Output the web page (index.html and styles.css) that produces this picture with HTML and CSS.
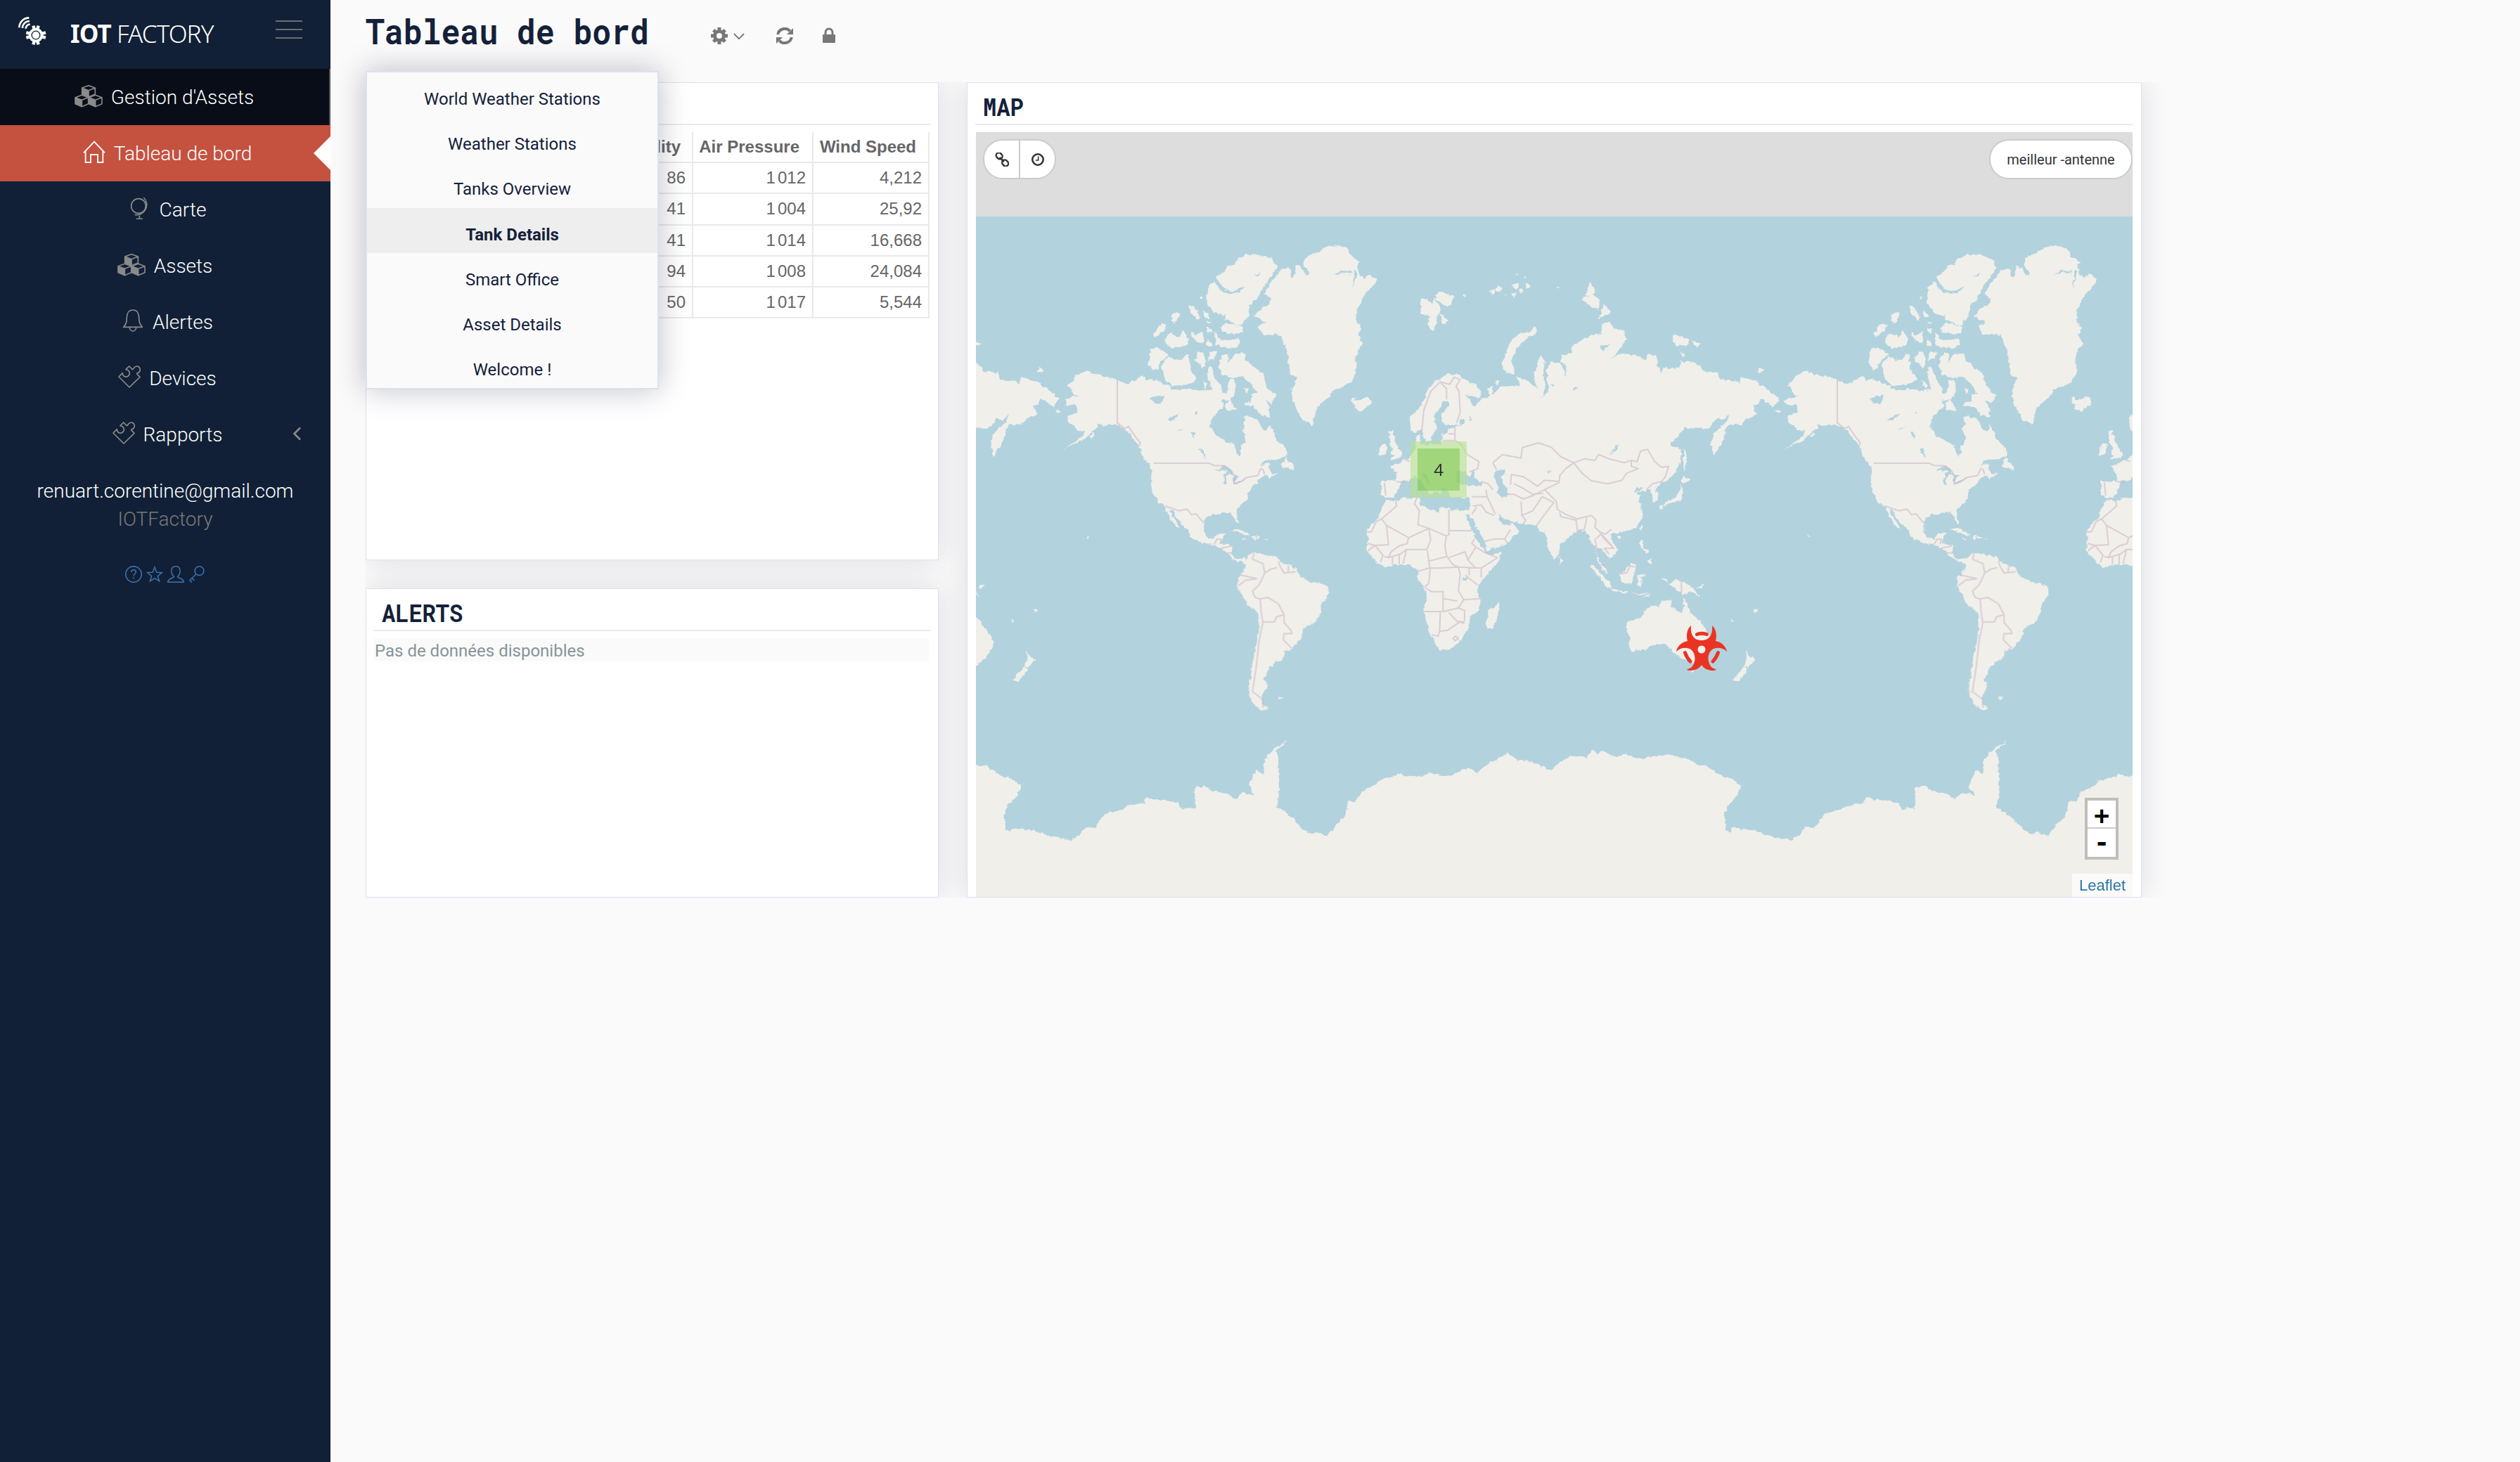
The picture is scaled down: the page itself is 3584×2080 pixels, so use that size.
FILE: index.html
```html
<!DOCTYPE html>
<html lang="fr">
<head>
<meta charset="utf-8">
<title>IOT Factory - Tableau de bord</title>
<link rel="stylesheet" href="styles.css">
</head>
<body>
<svg class="defs" width="0" height="0">
  <defs>
    <symbol id="cube" viewBox="0 0 64 56" overflow="visible">
      <path d="M32 3L60 13V40L32 52L4 40V13Z M4 13L32 24L60 13 M32 24V52" fill="none" stroke="currentColor" stroke-width="5" stroke-linejoin="round"/>
      <path d="M4 13L32 24V52L4 40Z" fill="currentColor"/>
    </symbol>
    <symbol id="cubes" viewBox="0 0 120 96">
      <use href="#cube" x="28" y="-1" width="64" height="56"/>
      <use href="#cube" x="-1" y="40" width="64" height="56"/>
      <use href="#cube" x="57" y="40" width="64" height="56"/>
    </symbol>
    <symbol id="puzzle" viewBox="0 0 96 96">
      <path d="M48 93L3 48L19 32C18 44 29 52 40 47C51 42 52 26 42 20L33 17L47 3L61 17C64 16 65 14 67 11C72 2 85 1 91 9C97 18 92 31 82 32C79 33 79 36 82 38L93 49Z" fill="none" stroke="currentColor" stroke-width="5" stroke-linejoin="round"/>
    </symbol>
  </defs>
</svg>

<aside class="sidebar">
  <header class="brand">
    <svg class="brand-mark" viewBox="0 0 120 120">
      <g fill="none" stroke="#fff" stroke-width="8">
        <path d="M4 46A42 42 0 0 1 46 4"/><path d="M18 48A30 30 0 0 1 48 18" /><path d="M32 50A18 18 0 0 1 50 32"/>
      </g>
      <circle cx="75" cy="78" r="31" fill="#fff"/>
      <g stroke="#fff" stroke-width="13">
        <path d="M64 38L86 118M86 38L64 118M34 67L117 89M34 89L117 67"/>
      </g>
      <circle cx="75" cy="78" r="17.5" fill="#fff" stroke="#112036" stroke-width="4"/>
    </svg>
    <div class="brand-name"><b>IOT</b> FACTORY</div>
    <div class="burger"><i></i><i></i><i></i></div>
  </header>
  <nav class="nav">
    <a class="nav-item nav-item--dark nav-item--cubes"><svg class="ico-cubes"><use href="#cubes"/></svg><span>Gestion d'Assets</span></a>
    <a class="nav-item nav-item--active"><svg class="ico" viewBox="0 0 96 96"><path d="M3 52L48 5L93 52M11 45V93H33V60H63V93H85V45" fill="none" stroke="currentColor" stroke-width="5.5"/></svg><span>Tableau de bord</span></a>
    <a class="nav-item"><svg class="ico" viewBox="0 0 96 96"><g fill="none" stroke="currentColor" stroke-width="5"><circle cx="42" cy="39" r="31"/><path d="M64 3A43 43 0 0 1 26 76M46 80V93M32 94H60"/></g></svg><span>Carte</span></a>
    <a class="nav-item nav-item--cubes"><svg class="ico-cubes"><use href="#cubes"/></svg><span>Assets</span></a>
    <a class="nav-item"><svg class="ico" viewBox="0 0 96 96"><path d="M8 76C18 64 22 58 22 36C22 16 32 3 48 3S74 16 74 36C74 58 78 64 88 76ZM34 78C34 98 62 98 62 78" fill="none" stroke="currentColor" stroke-width="5" stroke-linejoin="round"/></svg><span>Alertes</span></a>
    <a class="nav-item"><svg class="ico"><use href="#puzzle"/></svg><span>Devices</span></a>
    <a class="nav-item"><svg class="ico"><use href="#puzzle"/></svg><span>Rapports</span><svg class="nav-more" viewBox="0 0 12 20"><path d="M11 1.500L2.500 10L11 18.500" fill="none" stroke="currentColor" stroke-width="2.600"/></svg></a>
  </nav>
  <div class="user">
    <div class="user-mail">renuart.corentine@gmail.com</div>
    <div class="user-org">IOTFactory</div>
    <div class="user-links">
      <svg viewBox="0 0 24 24"><circle cx="12" cy="12" r="11.300"/><path d="M8.800 9C8.800 4.800 15.300 4.800 15.300 9C15.300 11.500 12 11.500 12 14.500M12 16.500V18.500"/></svg>
      <svg viewBox="0 0 24 24"><path d="M12 2L14.800 9.200L22.300 9.600L16.500 14.400L18.500 21.800L12 17.600L5.500 21.800L7.500 14.400L1.700 9.600L9.200 9.200Z"/></svg>
      <svg viewBox="0 0 24 24"><path d="M9.500 15.500C4.500 11 4 .8 12 .8S19.500 11 14.500 15.500C15.500 18 23.200 17.500 23.200 23.200H.8C.8 17.500 8.500 18 9.500 15.500Z"/></svg>
      <svg viewBox="0 0 24 24"><circle cx="15.500" cy="7.200" r="6.400"/><path d="M11 11.800L2 20.500L5 23.500M5 17.500L8.500 21"/></svg>
    </div>
  </div>
</aside>

<main class="main">
  <header class="topbar">
    <h1 class="title">Tableau de bord</h1>
    <div class="tools">
      <svg class="tool-gear" viewBox="0 0 24 24"><g stroke="currentColor" stroke-width="5"><path d="M12 0V24M0 12H24M3.800 3.800L20.200 20.200M20.200 3.800L3.800 20.200"/></g><circle cx="12" cy="12" r="8.800" fill="currentColor"/><circle cx="12" cy="12" r="4" fill="#fafafa"/></svg>
      <svg class="tool-chev" viewBox="0 0 16 10"><path d="M1 1L8 8.200L15 1" fill="none" stroke="currentColor" stroke-width="1.800"/></svg>
      <svg class="tool-sync" viewBox="0 0 24 24"><path d="M2.200 10A10 10 0 0 1 19.500 5.200M21.800 14A10 10 0 0 1 4.500 18.800" fill="none" stroke="currentColor" stroke-width="4"/><path d="M24 1V10H15ZM0 23V14H9Z" fill="currentColor"/></svg>
      <svg class="tool-lock" viewBox="0 0 18 22"><path d="M4 11V7.500A5 5.500 0 0 1 14 7.500V11" fill="none" stroke="currentColor" stroke-width="3"/><rect y="10" width="18" height="12" rx="1" fill="currentColor"/></svg>
    </div>
    <ul class="menu">
      <li>World Weather Stations</li>
      <li>Weather Stations</li>
      <li>Tanks Overview</li>
      <li class="is-current">Tank Details</li>
      <li>Smart Office</li>
      <li>Asset Details</li>
      <li>Welcome !</li>
    </ul>
  </header>

  <section class="board">
    <article class="card card--data">
      <div class="card-head"></div>
      <table class="grid">
        <thead><tr><th class="c1">Humidity</th><th class="c2">Air Pressure</th><th class="c3">Wind Speed</th></tr></thead>
        <tbody>
          <tr><td>86</td><td><i>1</i>012</td><td>4,212</td></tr>
          <tr><td>41</td><td><i>1</i>004</td><td>25,92</td></tr>
          <tr><td>41</td><td><i>1</i>014</td><td>16,668</td></tr>
          <tr><td>94</td><td><i>1</i>008</td><td>24,084</td></tr>
          <tr><td>50</td><td><i>1</i>017</td><td>5,544</td></tr>
        </tbody>
      </table>
    </article>

    <article class="card card--alerts">
      <div class="card-head"><h2>ALERTS</h2></div>
      <p class="empty">Pas de données disponibles</p>
    </article>

    <article class="card card--map">
      <div class="card-head"><h2>MAP</h2></div>
      <div class="map">
        <svg class="map-tiles" viewBox="1388 188 1645 1088" preserveAspectRatio="none">
          <defs>
            <filter id="coast" x="0" y="0" width="100%" height="100%">
              <feTurbulence type="fractalNoise" baseFrequency="0.16" numOctaves="2" seed="4"/>
              <feDisplacementMap in="SourceGraphic" scale="6" xChannelSelector="R" yChannelSelector="G"/>
              <feGaussianBlur stdDeviation="0.5"/>
            </filter>
            <g id="world-land">
              <g transform="translate(1460 330) scale(.33333)">
                <path d="M258 592L285 608L320 612L360 622L387 630L430 650L470 628L500 613L510 634L530 630L560 635L590 648L612 655L612 670L660 675L690 668L715 672L750 680L765 672L790 675L785 650L772 620L775 580L790 575L803 620L815 640L830 650L835 685L850 690L860 670L865 630L885 630L893 660L890 690L870 715L830 720L842 745L815 770L790 795L783 830L800 850L805 870L840 885L860 900L888 905L890 930L905 957L915 945L912 915L935 895L935 870L920 850L930 820L925 790L945 785L985 800L1000 830L1015 850L1030 845L1040 822L1060 865L1070 890L1110 925L1112 950L1080 970L1020 972L995 1002L1015 990L1040 985L1035 1010L1050 1035L1078 1025L1035 1054L1025 1040L1010 1042L988 1060L985 1075L965 1085L950 1100L945 1115L943 1140L900 1180L893 1200L907 1240L898 1245L882 1215L870 1198L835 1198L820 1208L790 1205L765 1220L757 1245L757 1280L770 1305L800 1310L815 1290L850 1283L840 1310L830 1330L850 1333L882 1340L877 1370L885 1390L905 1398L925 1388L940 1402L928 1410L905 1408L880 1395L855 1368L830 1350L800 1335L765 1332L730 1318L695 1298L690 1275L660 1245L635 1215L622 1188L610 1185L625 1215L640 1240L657 1267L640 1260L615 1225L595 1190L592 1170L560 1155L535 1105L530 1060L535 1015L520 985L498 965L490 940L478 910L460 890L430 850L410 835L385 825L350 822L325 828L305 820L300 835L285 850L265 868L240 888L210 903L185 914L150 935L188 908L215 890L240 870L250 850L215 845L205 825L178 810L175 785L218 770L215 740L175 740L160 718L195 705L220 705L200 690L190 670L172 655L200 635L210 612L235 602Z"/>
                <path d="M1065 190L1085 165L1115 152L1130 165L1125 190L1140 195L1150 145L1165 145L1180 165L1200 190L1208 175L1180 140L1190 110L1220 95L1250 80L1290 62L1330 57L1370 72L1385 100L1420 128L1412 155L1420 180L1440 195L1465 180L1494 205L1480 230L1445 265L1425 300L1410 340L1408 380L1428 410L1415 440L1435 475L1415 500L1405 545L1405 605L1385 640L1350 660L1315 670L1295 700L1270 720L1245 740L1235 770L1225 800L1218 827L1200 808L1180 805L1160 775L1140 730L1130 690L1140 655L1155 620L1125 610L1120 560L1112 510L1095 470L1085 445L1065 435L1010 442L985 405L1020 385L970 360L1005 325L1035 310L1042 285L1015 265L1040 220Z"/>
                <path d="M1068 150L1045 115L1000 98L940 95L900 115L885 140L860 145L840 170L808 190L830 225L850 245L880 255L915 240L930 232L910 255L870 265L845 258L820 240L800 210L775 240L768 300L795 340L840 360L850 345L845 375L870 380L890 397L920 400L925 380L945 365L955 310L985 285L1000 250L1030 210Z"/>
                <path d="M830 410L850 385L925 408L915 432L880 435L830 425ZM805 425L825 460L870 462L905 453L912 480L890 495L830 492L805 480ZM767 408L790 415L793 432L770 425ZM770 460L788 470L790 490L768 480ZM700 425L720 440L750 425L757 460L750 478L720 465ZM575 390L600 395L590 420L550 447L543 437ZM590 455L615 430L650 450L665 420L690 455L680 485L620 497L590 470ZM690 312L715 320L742 365L730 375L700 345ZM625 345L655 342L650 360L635 390L615 378ZM752 335L775 350L780 370L758 365ZM770 380L792 382L780 392ZM735 275L748 275L746 290Z"/>
                <path d="M530 500L560 495L605 525L575 550L560 580L543 590L520 565ZM605 530L635 545L665 545L680 520L695 525L700 590L728 625L700 650L620 657L590 625L583 600L575 570ZM735 512L757 515L765 560L750 585L735 560L715 545ZM780 510L818 512L800 540L775 550ZM845 518L862 520L860 560L875 535L890 520L930 520L935 550L1010 605L1018 640L1030 670L1066 697L1045 733L1020 720L1035 750L1038 795L1000 780L970 745L925 742L930 728L960 722L960 690L985 690L960 650L920 615L880 625L830 605L822 570L828 535ZM850 725L870 715L880 740L900 760L850 765ZM930 665L948 670L940 687ZM753 632L772 650L760 668Z"/>
                <path d="M1385 708L1405 705L1400 720L1425 715L1455 703L1475 730L1430 766L1400 755L1402 740L1385 725ZM1105 955L1115 980L1133 985L1139 1018L1120 1010L1088 1003ZM868 1272L900 1266L955 1295L930 1294L900 1278ZM960 1300L985 1296L1005 1306L975 1313ZM42 592L60 580L76 592L48 600ZM120 762L135 760L147 770L133 771ZM258 1295L270 1300L262 1306ZM270 872L285 855L292 862L278 878ZM922 1308H938V1313H922ZM1015 1308H1030V1312H1015Z"/>
              </g>
              <path transform="translate(1360 600) scale(.548469 .446429)" d="M735 440L750 440L765 420L780 418L800 425L828 428L838 445L860 455L880 465L888 490L915 508L945 515L965 530L967 548L948 580L943 615L930 640L900 660L895 690L870 725L850 730L853 745L845 758L825 765L825 778L810 782L808 800L798 820L808 840L798 865L792 880L795 900L810 912L795 920L775 905L762 880L757 850L765 800L770 750L780 700L784 650L785 610L755 585L740 550L728 525L732 495L745 475L750 455ZM833 878L850 878L840 885ZM715 343L735 342L763 360L745 360Z"/>
              <g transform="translate(1900 520) scale(.382653 .333333)">
                <path d="M190 572L218 580L250 567L315 562L312 598L350 612L380 628L388 603L435 615L478 620L500 618L490 645L505 690L520 735L540 770L560 805L575 808L617 798L605 835L570 880L545 912L528 940L525 965L537 1000L535 1040L497 1075L498 1110L478 1150L450 1190L430 1208L383 1218L370 1190L350 1145L325 1050L338 990L325 940L303 910L308 870L290 862L268 848L220 850L180 862L150 840L112 790L118 740L112 710L130 680L160 650L165 615ZM602 1006L610 1035L595 1090L582 1125L562 1122L558 1090L565 1045L590 1030Z"/>
                <path d="M1085 1095L1140 1075L1145 1050L1170 1025L1200 1025L1215 1000L1252 1005L1245 1030L1280 1055L1290 1040L1293 990L1305 1015L1320 1060L1350 1085L1377 1130L1405 1180L1398 1210L1370 1250L1340 1280L1320 1262L1280 1250L1260 1225L1245 1215L1220 1188L1185 1190L1150 1210L1105 1220L1090 1205L1092 1160L1078 1115ZM1310 1295L1338 1297L1326 1312Z"/>
                <path d="M195 280L212 275L208 292L220 300L218 325L232 350L247 372L240 395L200 405L215 385L205 375L212 355L200 330ZM175 335L190 335L188 372L160 385L162 355Z"/>
              </g>
              <g transform="translate(1980 370) scale(.333333)">
                <path d="M-20 1015L-47 1005L-47 940L18 945L18 910L-8 880L10 875L47 855L76 840L100 800L105 750L120 745L118 790L170 785L210 785L215 745L240 740L235 720L300 702L270 705L230 705L213 690L212 655L243 620L243 600L220 600L210 625L185 650L178 690L195 715L175 740L165 772L140 772L130 745L125 718L100 738L80 730L74 670L110 640L140 590L150 550L190 515L240 485L290 490L300 508L330 520L360 535L382 565L375 590L345 585L312 573L330 600L350 630L370 600L420 578L405 545L425 540L430 572L460 540L545 535L530 495L580 515L618 548L605 490L622 430L635 405L650 435L645 490L655 540L640 585L660 570L665 540L658 470L680 435L720 440L745 500L740 450L720 430L722 405L765 400L770 365L850 320L892 315L895 275L925 262L945 290L985 300L1000 340L985 365L935 422L970 400L1000 405L1040 405L1080 425L1090 400L1130 410L1130 450L1150 485L1160 455L1175 465L1225 460L1230 430L1270 435L1305 445L1330 475L1390 480L1400 510L1465 515L1480 528L1490 500L1552 515L1612 560L1652 590L1627 625L1597 605L1572 592L1562 618L1537 620L1560 660L1512 677L1485 705L1440 700L1422 725L1417 765L1385 815L1372 838L1358 785L1370 740L1400 715L1425 690L1437 658L1412 685L1385 675L1350 720L1250 718L1185 788L1200 795L1235 805L1232 860L1200 915L1170 945L1145 950L1125 980L1135 1025L1112 1035L1110 1000L1095 980L1040 995L1072 968L1060 965L1030 990L1065 1005L1050 1020L1070 1070L1068 1100L1040 1140L975 1165L940 1165L930 1185L960 1230L955 1255L930 1275L905 1250L880 1225L870 1240L885 1290L905 1310L920 1340L905 1330L875 1280L868 1220L845 1210L840 1180L820 1155L780 1160L715 1215L712 1255L692 1280L670 1240L652 1160L630 1162L615 1130L545 1125L500 1110L470 1100L448 1080L460 1110L472 1128L500 1130L512 1122L542 1155L495 1205L405 1242L395 1200L370 1160L340 1105L323 1075L332 1055L335 1012L300 1015L245 1008L235 980L215 975L205 1005L190 990L165 960L135 905L125 910L150 950L190 980L165 1000L120 940L95 925L70 940L35 945L30 975L5 1010Z"/>
                <path d="M608 286L620 298L604 322L572 334L534 374L508 430L524 489L490 482L466 457L480 405L508 345L540 314L588 306ZM118 170L150 162L170 188L180 162L212 215L192 232L188 270L172 305L148 270L162 240L126 230ZM183 150L215 136L264 155L252 187L230 197L190 172ZM203 225L239 260L215 275ZM845 92L867 130L850 157L823 150ZM808 165L850 148L885 170L882 217L845 195ZM905 186L932 222L880 252ZM1203 318L1267 340L1260 362L1215 367L1196 345ZM1275 343L1317 358L1300 370ZM1226 388L1255 405L1240 414ZM508 103L543 98L530 127ZM573 93L590 110L570 127ZM543 118L560 130L545 140ZM416 130L442 123L430 153ZM448 110L472 120L460 137L443 130ZM508 145L532 138L520 158ZM298 148L318 145L308 158ZM441 520L458 514L452 532ZM205 740L218 738L212 748ZM526 60L536 62L530 68ZM562 68L574 70L566 75ZM702 115L714 116L708 122ZM480 145L490 145L485 152Z"/>
                <path d="M1240 920L1270 938L1240 955L1235 940ZM1230 958L1240 985L1232 1025L1195 1032L1155 1050L1165 1032L1210 1015L1225 990ZM1138 1045L1155 1048L1146 1068ZM1244 797L1258 860L1250 902L1241 860ZM1062 1128L1070 1135L1062 1155L1056 1145ZM958 1175L975 1178L965 1192ZM712 1265L728 1285L718 1300Z"/>
                <path d="M842 1303L865 1310L935 1385L935 1402L915 1395L880 1350ZM935 1402L1010 1418L1005 1423L940 1412ZM962 1340L985 1335L1020 1295L1042 1305L1030 1350L1020 1382L985 1378ZM1050 1345L1085 1338L1060 1355L1080 1385L1062 1370L1058 1397L1048 1385ZM1145 1356L1175 1362L1180 1385L1210 1365L1250 1378L1290 1405L1312 1438L1275 1415L1240 1427L1215 1405L1185 1385ZM1060 1190L1073 1195L1070 1225L1095 1245L1085 1255L1056 1220ZM1088 1285L1105 1265L1108 1298ZM1020 1418L1060 1425L1110 1418L1060 1432ZM1065 1440L1100 1425L1095 1435ZM1300 1398L1335 1383L1320 1402Z"/>
              </g>
              <path transform="translate(2200 600) scale(.57398 .446429)" d="M493 731L503 750L518 755L498 784L490 778L497 760ZM490 778L497 792L475 828L460 824ZM512 600L524 598L516 610ZM455 628L463 636L458 638Z"/>
            </g>
            <g id="antarctica">
              <path transform="translate(1360 600) scale(.548469 .446429)" d="M48 1095L75 1095L120 1130L145 1138L168 1160L160 1190L135 1220L125 1250L128 1300L138 1310L145 1295L200 1302L245 1322L300 1333L325 1310L335 1290L360 1292L385 1248L420 1240L450 1222L487 1215L492 1195L515 1203L575 1213L588 1238L600 1228L620 1235L618 1165L645 1160L660 1175L700 1185L725 1203L740 1182L772 1190L758 1155L780 1108L795 1125L800 1075L820 1045L860 1015L828 1050L835 1070L838 1180L832 1228L865 1255L900 1300L920 1314L935 1308L962 1320L985 1285L1010 1255L1018 1210L1035 1212L1050 1180L1080 1162L1100 1140L1140 1130L1148 1122L1165 1130L1215 1127L1225 1118L1270 1130L1300 1118L1325 1103L1350 1120L1375 1092L1410 1070L1428 1056L1450 1074L1505 1088L1535 1110L1545 1115L1568 1090L1600 1075L1600 1700H48Z"/>
              <path transform="translate(2200 600) scale(.57398 .446429)" d="M-10 1110L5 1118L30 1085L60 1065L100 1068L112 1045L125 1055L140 1050L175 1070L195 1058L225 1074L265 1068L300 1060L345 1073L380 1097V1700H-10Z"/>
            </g>
            <g id="world-water">
              <g transform="translate(1980 370) scale(.333333)">
                <path d="M280 900L310 905L330 925L350 895L355 905L345 925L385 950L380 963L300 962L278 950ZM432 920L450 898L485 895L485 915L465 920L470 950L492 975L490 1010L470 1013L445 990L455 970ZM968 775L960 805L920 835L950 805ZM305 940L318 952L300 962ZM285 685L305 680L312 695L295 705ZM325 655L340 685L330 685ZM885 365L930 358L900 385ZM300 1350L325 1352L315 1370L300 1365ZM660 905L680 897L665 912ZM775 545L790 542L778 560ZM680 528L695 535L685 545Z"/>
              </g>
              <g transform="translate(1460 330) scale(.33333)">
                <path d="M525 712L560 698L587 700L575 735L540 725ZM595 800L655 775L620 808ZM642 848L675 835L660 845ZM805 1018L845 998L870 1012L885 1050L888 1035L908 1042L890 1060L885 1075L940 1048L925 1060L885 1082L880 1040L862 1030L852 1050L852 1078L842 1075L845 1035L860 1018ZM735 930L750 925L768 968L755 955ZM700 852L718 858L712 885ZM718 770L730 768L726 778ZM1310 185L1340 165L1390 168L1360 200L1385 175L1345 172ZM1400 165L1412 170L1390 245ZM970 188L1000 175L985 190ZM1035 985L1080 975L1085 1000L1050 1020L1038 1010Z"/>
              </g>
              <path transform="translate(1900 520) scale(.382653 .333333)" d="M480 640L492 640L515 690L535 735L555 790L565 805L540 775L515 720Z"/>
            </g>
            <g id="world-borders" class="borders">
              <g transform="translate(1460 330) scale(.33333)">
                <path d="M387 630V815L420 840L435 830L465 875L485 900L480 915M543 987H780L800 997L845 998L875 1020L890 1050L885 1075L915 1065L940 1048L985 1040L1000 1010L1010 1015L1015 1035M592 1170L650 1190L685 1183L705 1208L722 1202L757 1243M800 1335L812 1312H832L825 1332M830 1350L877 1340M858 1370H877M980 1298V1310"/>
              </g>
              <path transform="translate(1360 600) scale(.548469 .446429)" d="M772 420L768 438L795 452L800 482L785 520L768 540L775 560L788 565L790 600L795 640L785 700L778 780L768 860L795 885V912M788 565L808 560L835 580L850 615L830 622L825 638H795M850 615V640L868 665L870 675H850L848 695L870 722M735 488L780 500M732 522L750 505L780 500M800 482L815 470L832 465M835 445L840 462L850 482L880 478M862 458L860 480"/>
              <path transform="translate(1900 520) scale(.382653 .333333)" d="M222 575L225 600L170 655L150 665L132 710H112M170 655L188 682L270 735L345 695M188 682L195 765L145 768L118 760M300 565L292 590L310 620L305 680L345 695L410 728L420 722V615M420 705H505M270 735L265 760L235 770L205 795L195 820L180 815M345 695L352 745L338 785L262 785L250 845M410 728L405 770L412 815L345 835L350 870L345 930L330 945M340 790L345 835M412 815L435 850L455 860L540 865L600 820L555 800L520 775L490 830L520 865M520 775L505 760L515 740M490 830L480 795L420 820M308 878L345 865H380L455 860L462 890L455 960L475 1000M495 865V895M540 865V905M480 895L525 935M330 948L355 965H398V1050H325M400 1050L455 1035L475 1000M400 995L450 1005M475 1000L535 995M388 1055L385 1135L415 1130L460 1095L478 1100M420 1055L450 1092L478 1095M355 1150L380 1155L385 1135M455 1035L478 1045V1090M120 790L145 768L175 810L165 840M210 850V815L235 805V850M195 820L240 805L262 785M435 1165L445 1155L455 1165L442 1175ZM180 500L185 555"/>
              <g transform="translate(1980 370) scale(.333333)">
                <path d="M290 780L320 830L370 860L365 890L330 905M445 895L430 865L470 830L550 845L555 800L625 780L680 800L720 840L775 865L820 848L865 855L880 830L930 850L990 865L1020 855L1045 860L1060 815L1090 808L1120 860L1150 885L1180 880L1165 925L1150 945L1110 955L1085 980M775 865L810 910L850 942L920 955L980 940L1000 910L1050 890L1020 880V855M775 865L740 890L715 920L712 950L650 980L700 1030L705 1065L740 1085L790 1105L850 1090L870 1110L865 1140L885 1160L910 1170L935 1150M505 960L508 915L560 925L590 945L620 965L650 940L712 945M520 955L560 975L600 1000L645 995M490 1000H520L560 1020L600 1005L650 980M550 1030L553 1090L570 1110L560 1125M553 1090L600 1070L640 1010L690 1035M690 1035L670 1060L640 1100L615 1135M380 945L410 955L430 980M400 980L405 1010H340M405 1010L440 1085M345 1050L380 1045L400 1075L435 1090M340 1085L360 1055M395 1200L440 1190H480L505 1150M480 1190L490 1205M715 1078L720 1095L785 1110L790 1155L820 1150L830 1100M870 1190L890 1170L905 1190L940 1225M865 1190L875 1240M885 1160L920 1200L945 1230H905L925 1255M125 745L135 640L165 560L205 520L232 550V595M205 520L245 530L265 500L290 510L272 540L285 560L290 650L275 695M268 715V770H215M240 742H268M268 770L300 790M967 1340L1000 1335L1015 1305L1035 1310M1234 1375V1425M18 945L55 950M50 850L76 860M890 1298L905 1305"/>
              </g>
            </g>
          </defs>
          <rect x="1388" y="308" width="1645" height="968" fill="#b2d2de"/>
          <g filter="url(#coast)">
            <rect x="1380" y="308" width="1660" height="980" fill="none"/>
            <g fill="#f0efea">
              <use href="#world-land" x="-1024"/><use href="#world-land"/><use href="#world-land" x="1024"/>
              <use href="#antarctica"/><use href="#antarctica" x="1024"/>
            </g>
            <g fill="#b2d2de">
              <use href="#world-water" x="-1024"/><use href="#world-water"/><use href="#world-water" x="1024"/>
            </g>
          </g>
          <use href="#world-borders"/><use href="#world-borders" x="1024"/>
        </svg>
        <div class="map-group">
          <span><svg viewBox="0 0 20 20"><g fill="none" stroke="#333" stroke-width="2.400"><rect x="-2.600" y="-4" width="7.600" height="9.500" rx="3.600" transform="translate(4.800 5) rotate(-42)"/><rect x="-4" y="-5" width="7.600" height="9.500" rx="3.600" transform="translate(15 15) rotate(-42)"/><path d="M6.500 7L13 13"/></g></svg></span>
          <span><svg viewBox="0 0 20 20"><circle cx="10" cy="10" r="7.700" fill="none" stroke="#333" stroke-width="2.600"/><path d="M10.700 5.500V11H7" fill="none" stroke="#333" stroke-width="1.600"/></svg></span>
        </div>
        <div class="map-pill">meilleur -antenne</div>
        <div class="cluster"><span>4</span></div>
        <svg class="hazard" viewBox="0 0 72 64"><path fill="#eb3323" fill-rule="evenodd" d="M21 0C20 12 24 21 36 21C48 21 52 12 51 0C57 5 58 14 56 22C64 23 71 30 72 37C66 31 56 30 50 35C44 41 44 52 50 59C53 62 56 61 57 63L53 64C46 64 40 62 36 56C32 62 26 64 19 64L15 63C16 61 19 62 22 59C28 52 28 41 22 35C16 30 6 31 0 37C1 30 8 23 16 22C14 14 15 5 21 0ZM36 28.500A5.500 5.500 0 1 0 36 39.500A5.500 5.500 0 1 0 36 28.500Z"/><path d="M29.500 12.500Q36 10 43.500 12.500M12.500 38.500Q15 46 20 51M59.500 38.500Q57 46 52 51" fill="none" stroke="#eb3323" stroke-width="5" stroke-linecap="round"/></svg>
        <div class="zoom"><span>+</span><span>-</span></div>
        <div class="credit">Leaflet</div>
      </div>
    </article>
  </section>
</main>
</body>
</html>
```
FILE: styles.css
```css
* { box-sizing: border-box; }
html, body { margin: 0; padding: 0; }
body {
  display: flex;
  width: 3584px;
  height: 2080px;
  overflow: hidden;
  background: #fafafa;
  font-family: Roboto, "Noto Sans", sans-serif;
}
.defs { position: absolute; }
svg { display: block; flex: none; }

/* Sidebar */
.sidebar { flex: none; width: 470px; height: 2080px; background: #112036; }
.brand { display: flex; height: 98px; padding: 24px 40px 0 26px; }
.brand-mark { width: 40px; height: 40px; }
.brand-name {
  width: 290px;
  margin-left: 34px;
  margin-top: -1px;
  color: #fff;
  font: 300 35px/50px "Noto Sans", sans-serif;
  letter-spacing: -.9px;
  white-space: nowrap;
}
.brand-name b { font-weight: 700; }
.burger { display: flex; flex-direction: column; gap: 10px; padding-top: 5px; margin-left: 2px; }
.burger i { width: 38px; height: 2px; background: #6b6d71; }

.nav-item {
  position: relative;
  display: flex;
  align-items: center;
  justify-content: center;
  gap: 12px;
  height: 80px;
  padding-left: 6px;
  color: #fff;
  font-size: 28px;
  font-weight: 350;
}
.nav-item svg { color: #8a8a8a; }
.nav-item span { margin-top: 1px; }
.nav-item--cubes { padding-left: 0; padding-right: 1px; }
.nav-item--dark { background: #080d17; border-right: 2px solid #555; }
.nav-item--active { background: #c5513f; }
.nav-item--active svg { color: #fff; }
.nav-item--active::after {
  content: "";
  position: absolute;
  right: 0;
  top: 16px;
  border: 24px solid transparent;
  border-left: 0;
  border-right-color: #fff;
}
.ico { width: 32px; height: 32px; margin-bottom: 4px; }
.ico-cubes { width: 40px; height: 32px; margin-bottom: 3px; }
.nav-more { position: absolute; right: 42px; top: 29px; width: 12px; height: 20px; }

.user { padding-top: 21px; text-align: center; font-size: 28px; font-weight: 350; line-height: 40px; }
.user-mail { color: #fff; }
.user-org { color: #7a7a7a; }
.user-links { display: flex; justify-content: center; gap: 6px; padding-top: 46px; }
.user-links svg { width: 24px; height: 24px; fill: none; stroke: #3d74b4; stroke-width: 1.5; }

/* Top bar */
.main { flex: 1; min-width: 0; }
.topbar { position: relative; display: flex; height: 117px; padding-left: 50px; }
.title {
  margin: 0;
  width: 491px;
  height: 90px;
  color: #14213a;
  font: 700 45px/88px "Roboto Mono", "Liberation Mono", monospace;
  letter-spacing: -.15px;
  white-space: nowrap;
  transform: scaleY(1.12);
}
.tools { display: flex; align-items: flex-start; padding-top: 39px; color: #777; }
.tool-gear { width: 24px; height: 24px; }
.tool-chev { width: 16px; height: 10px; margin: 8px 45px 0 8px; }
.tool-sync { width: 24px; height: 24px; margin-right: 42px; }
.tool-lock { width: 18px; height: 22px; }

.menu {
  position: absolute;
  left: 50px;
  top: 101px;
  z-index: 5;
  width: 417px;
  margin: 0;
  padding: 0;
  border: 2px solid #dbe2ee;
  background: #fafafa;
  box-shadow: 0 0 40px rgba(20, 20, 60, .27);
  list-style: none;
}
.menu li { height: 64.2px; color: #14213a; font-size: 24px; line-height: 76px; text-align: center; }
.menu .is-current { background: #eee; font-weight: 700; }

/* Board */
.board {
  display: grid;
  grid-template-columns: 815px 1671px;
  grid-template-rows: 680px 440px;
  gap: 40px;
  width: 2600px;
  height: 1160px;
  margin-left: 50px;
  overflow: hidden;
}
.card { padding: 0 11px; border: 1px solid #dbe0ec; background: #fff; box-shadow: 0 0 40px rgba(20, 20, 60, .13); }
.card--map { grid-column: 2; grid-row: 1 / 3; }
.card-head { height: 60px; padding-left: 11px; border-bottom: 2px solid #e8eaf0; }
.card-head h2 {
  margin: 0;
  height: 68px;
  color: #14213a;
  font: 700 32px/68px "Roboto Mono", "Liberation Mono", monospace;
  transform: scaleY(1.12);
}

.grid {
  width: 790px;
  margin-top: 10px;
  border-spacing: 0;
  table-layout: fixed;
  color: #666;
  font: 24px/28px "Liberation Sans", Arial, sans-serif;
}
.grid th, .grid td {
  height: 44.2px;
  padding: 0 9px 0 0;
  border-right: 2px solid #e9e9e9;
  border-bottom: 2px solid #e9e9e9;
  text-align: right;
}
.grid th { padding-right: 18px; white-space: nowrap; }
.grid .c1 { width: 454px; padding-right: 16px; }
.grid .c2 { width: 171px; }
.grid .c3 { width: 165px; padding-right: 17px; }
.grid i { margin-right: 3px; font-style: normal; }

.empty { width: 789px; height: 33px; margin: 10px 0 0; padding-left: 1px; background: #fafafa; color: #869499; font-size: 24px; line-height: 36px; }

/* Map */
.map { position: relative; width: 1645px; height: 1088px; margin-top: 10px; margin-left: 1px; background: #ddd; overflow: hidden; }
.map-tiles { width: 1645px; height: 1088px; }
.borders { fill: none; stroke: #cdb5c4; stroke-opacity: .6; }
.borders path { stroke-width: 2px; vector-effect: non-scaling-stroke; stroke-linejoin: round; }
.map-group {
  position: absolute;
  left: 10px;
  top: 10px;
  display: flex;
  width: 104px;
  height: 57px;
  border: 2px solid #ccc;
  border-radius: 28px;
  background: #fff;
}
.map-group span { display: flex; flex: 1; align-items: center; justify-content: center; }
.map-group span + span { border-left: 2px solid #ccc; }
.map-group svg { width: 20px; height: 20px; }
.map-pill {
  position: absolute;
  right: 0;
  top: 10px;
  width: 204px;
  height: 57px;
  border: 2px solid #ccc;
  border-radius: 28px;
  background: #fff;
  color: #333;
  font-size: 20px;
  line-height: 54px;
  text-align: center;
}
.cluster { position: absolute; left: 618px; top: 440px; width: 80px; height: 80px; padding: 10px; background: rgba(181, 226, 140, .6); }
.cluster span {
  display: block;
  height: 60px;
  background: rgba(110, 195, 60, .46);
  color: #333;
  font: 24px/60px "Noto Sans", sans-serif;
  text-align: center;
}
.hazard { position: absolute; left: 996px; top: 702px; width: 72px; height: 64px; }
.zoom { position: absolute; left: 1577px; top: 947px; width: 48px; height: 88px; border: 4px solid #bfbeba; background: #fff; }
.zoom span { display: block; height: 40px; color: #000; font: 700 36px/44px "DejaVu Sans Mono", monospace; text-align: center; }
.zoom span:first-child { border-bottom: 2px solid #ccc; }
.zoom span:last-child { line-height: 39px; }
.credit {
  position: absolute;
  right: 0;
  bottom: 0;
  width: 86px;
  height: 33px;
  background: rgba(255, 255, 255, .7);
  color: #2a76a6;
  font: 22px/34px "Liberation Sans", Arial, sans-serif;
  text-align: center;
}
```
